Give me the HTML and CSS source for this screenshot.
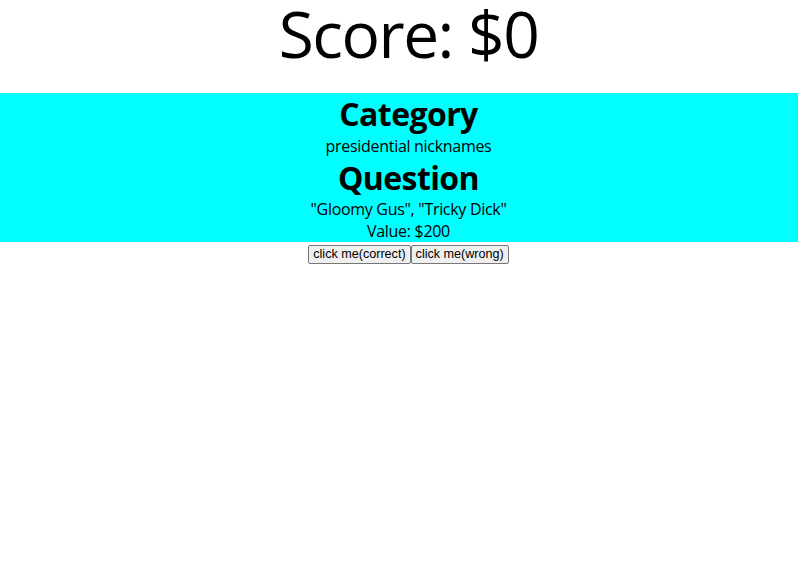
FILE: index.html
```html
<!DOCTYPE html>
<html>
<head>
<meta charset="utf-8">
<link rel="stylesheet" href="styles.css">
</head>
<body>
<div class="score">Score: $0</div>
<div class="card">
<h1 class="title">Category</h1>
<p class="line">presidential nicknames</p>
<h1 class="title">Question</h1>
<p class="line">"Gloomy Gus", "Tricky Dick"</p>
<p class="line">Value: $200</p>
</div>
<div class="actions"><button class="btn">click me(correct)</button><button class="btn">click me(wrong)</button></div>
</body>
</html>
```
FILE: styles.css
```css
html, body {
  margin: 0;
  padding: 0;
  background: #fff;
}
body {
  font-family: "Open Sans", "Noto Sans", "DejaVu Sans", sans-serif;
  font-size: 16px;
  color: #000;
  text-align: center;
}
.score {
  font-size: 64px;
  line-height: 68px;
  height: 93px;
  letter-spacing: -1.5px;
  padding-left: 19px;
}
.card {
  background: #00ffff;
  padding-left: 19px;
}
.title {
  margin: 0;
  font-size: 32px;
  font-weight: 700;
  line-height: 42.5px;
  letter-spacing: -0.6px;
}
.line {
  margin: 0;
  font-size: 16px;
  line-height: 21.3px;
  letter-spacing: -0.3px;
}
.actions {
  line-height: 21.3px;
  padding-left: 19px;
}
.btn {
  font-family: "Liberation Sans", Arial, sans-serif;
  font-size: 12.6px;
  line-height: 15px;
  background: #efefef;
  border: 1px solid #767676;
  border-radius: 2px;
  padding: 1px 4px;
  margin: 0;
  color: #000;
}
```
